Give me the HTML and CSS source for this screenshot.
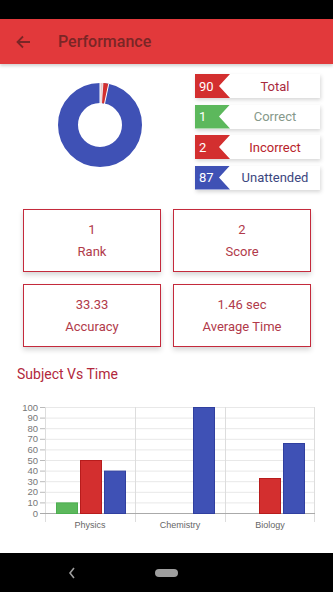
FILE: index.html
```html
<!DOCTYPE html>
<html>
<head>
<meta charset="utf-8">
<link rel="stylesheet" href="styles.css">
</head>
<body>
<div class="status"></div>
<header class="appbar">
  <svg class="back" width="16" height="14" viewBox="0 0 16 14"><path d="M15 7H2.5M8 1.5L2.5 7L8 12.5" fill="none" stroke="#7a2626" stroke-width="1.8"/></svg>
  <span class="title">Performance</span>
</header>
<main class="main">
  <section class="top">
    <div class="donut-wrap">
      <svg class="donut" width="84" height="84" viewBox="0 0 84 84">
        <g transform="rotate(-90 42 42)">
          <circle cx="42" cy="42" r="32" fill="none" stroke="#3f51b5" stroke-width="20"/>
          <circle cx="42" cy="42" r="32" fill="none" stroke="#d32f2f" stroke-width="20" stroke-dasharray="4.47 200" stroke-dashoffset="-2.23"/>
          <circle cx="42" cy="42" r="32" fill="none" stroke="#e8c9c9" stroke-width="20" stroke-dasharray="2.23 200"/>
        </g>
        <line x1="42" y1="42" x2="42" y2="0" stroke="#fff" stroke-width="1"/>
        <line x1="42" y1="42" x2="44.93" y2="0.1" stroke="#fff" stroke-width="0.8"/>
        <line x1="42" y1="42" x2="50.73" y2="0.9" stroke="#fff" stroke-width="1"/>
      </svg>
    </div>
    <div class="legend">
      <div class="chip"><span class="badge red">90</span><span class="lbl l-total">Total</span></div>
      <div class="chip"><span class="badge green">1</span><span class="lbl l-correct">Correct</span></div>
      <div class="chip"><span class="badge red">2</span><span class="lbl l-incorrect">Incorrect</span></div>
      <div class="chip"><span class="badge blue">87</span><span class="lbl l-unatt">Unattended</span></div>
    </div>
  </section>
  <section class="cards">
    <div class="card"><span>1</span><span>Rank</span></div>
    <div class="card"><span>2</span><span>Score</span></div>
    <div class="card"><span>33.33</span><span>Accuracy</span></div>
    <div class="card"><span>1.46 sec</span><span>Average Time</span></div>
  </section>
  <h2 class="sub">Subject Vs Time</h2>
  <svg class="chart" width="333" height="140" viewBox="0 395 333 140">
    <g stroke="#e8e8e8" stroke-width="1">
      <line x1="45" x2="315" y1="407.5" y2="407.5"/>
      <line x1="45" x2="315" y1="418.1" y2="418.1"/>
      <line x1="45" x2="315" y1="428.7" y2="428.7"/>
      <line x1="45" x2="315" y1="439.3" y2="439.3"/>
      <line x1="45" x2="315" y1="449.9" y2="449.9"/>
      <line x1="45" x2="315" y1="460.5" y2="460.5"/>
      <line x1="45" x2="315" y1="471.1" y2="471.1"/>
      <line x1="45" x2="315" y1="481.7" y2="481.7"/>
      <line x1="45" x2="315" y1="492.3" y2="492.3"/>
      <line x1="45" x2="315" y1="502.9" y2="502.9"/>
    </g>
    <g stroke="#bbb" stroke-width="1">
      <line x1="40" x2="45" y1="407.5" y2="407.5"/>
      <line x1="40" x2="45" y1="418.1" y2="418.1"/>
      <line x1="40" x2="45" y1="428.7" y2="428.7"/>
      <line x1="40" x2="45" y1="439.3" y2="439.3"/>
      <line x1="40" x2="45" y1="449.9" y2="449.9"/>
      <line x1="40" x2="45" y1="460.5" y2="460.5"/>
      <line x1="40" x2="45" y1="471.1" y2="471.1"/>
      <line x1="40" x2="45" y1="481.7" y2="481.7"/>
      <line x1="40" x2="45" y1="492.3" y2="492.3"/>
      <line x1="40" x2="45" y1="502.9" y2="502.9"/>
      <line x1="40" x2="45" y1="513.5" y2="513.5"/>
    </g>
    <g stroke="#ddd" stroke-width="1">
      <line x1="45.5" x2="45.5" y1="407" y2="522"/>
      <line x1="135.5" x2="135.5" y1="407" y2="522"/>
      <line x1="225.5" x2="225.5" y1="407" y2="522"/>
      <line x1="314.5" x2="314.5" y1="407" y2="522"/>
    </g>
    <line x1="40" x2="315" y1="513.5" y2="513.5" stroke="#aaa" stroke-width="1"/>
    <g class="ylab" text-anchor="end">
      <text x="38" y="410.5">100</text>
      <text x="38" y="421.1">90</text>
      <text x="38" y="431.7">80</text>
      <text x="38" y="442.3">70</text>
      <text x="38" y="452.9">60</text>
      <text x="38" y="463.5">50</text>
      <text x="38" y="474.1">40</text>
      <text x="38" y="484.7">30</text>
      <text x="38" y="495.3">20</text>
      <text x="38" y="505.9">10</text>
      <text x="38" y="516.5">0</text>
    </g>
    <g stroke-width="1">
      <rect x="56.5" y="502.9" width="21" height="10.6" fill="#5cb85c" stroke="#4caf50"/>
      <rect x="80.5" y="460.5" width="21" height="53" fill="#d32f2f" stroke="#b71c1c"/>
      <rect x="104.5" y="471.1" width="21" height="42.4" fill="#3f51b5" stroke="#303f9f"/>
      <rect x="193.5" y="407.5" width="21" height="106" fill="#3f51b5" stroke="#303f9f"/>
      <rect x="259.5" y="478.5" width="21" height="35" fill="#d32f2f" stroke="#b71c1c"/>
      <rect x="283.5" y="443.5" width="21" height="70" fill="#3f51b5" stroke="#303f9f"/>
    </g>
    <g class="xlab" text-anchor="middle">
      <text x="90" y="528">Physics</text>
      <text x="180" y="528">Chemistry</text>
      <text x="270" y="528">Biology</text>
    </g>
  </svg>
</main>
<nav class="navbar">
  <svg width="8" height="12" viewBox="0 0 8 12" class="nav-back"><path d="M6 1L2 6L6 11" fill="none" stroke="#9e9e9e" stroke-width="1.6"/></svg>
  <span class="pill"></span>
</nav>
</body>
</html>
```
FILE: styles.css
```css
* { box-sizing: border-box; }
html, body { margin: 0; padding: 0; }
body {
  width: 333px;
  height: 592px;
  display: flex;
  flex-direction: column;
  background: #fff;
  font-family: Roboto, "Noto Sans", sans-serif;
  overflow: hidden;
}
.status { height: 19px; background: #000; flex: none; }
.appbar {
  height: 45px;
  flex: none;
  background: #e2393b;
  display: flex;
  align-items: center;
  box-shadow: 0 2px 3px rgba(0,0,0,0.18);
  position: relative;
  z-index: 1;
}
.back { margin-left: 15px; margin-top: 1px; }
.title {
  margin-left: 27px;
  font-size: 16px;
  font-weight: 500;
  color: #7a2626;
}
.main { flex: 1; display: flex; flex-direction: column; }
.top { display: flex; padding-top: 10px; }
.donut-wrap { width: 195px; padding-left: 58px; padding-top: 9px; }
.donut { display: block; }
.legend { display: flex; flex-direction: column; gap: 6.5px; }
.chip {
  position: relative;
  width: 125px;
  height: 24px;
  display: flex;
  align-items: center;
  background: #fff;
  box-shadow: 1px 2px 4px rgba(0,0,0,0.16);
}
.badge {
  width: 35px;
  height: 24px;
  display: flex;
  align-items: center;
  padding-left: 4px;
  color: #fff;
  font-size: 13px;
  clip-path: polygon(0 0, 100% 0, 24px 50%, 100% 100%, 0 100%);
}
.badge.red { background: #d32f2f; }
.badge.green { background: #5cb85c; }
.badge.blue { background: #3f51b5; }
.lbl { flex: 1; text-align: center; font-size: 13px; }
.l-total { color: #a92a3e; }
.l-correct { color: #86998a; }
.l-incorrect { color: #b8232b; }
.l-unatt { color: #3b4680; }
.cards {
  display: grid;
  grid-template-columns: 138px 138px;
  column-gap: 12px;
  row-gap: 12px;
  padding-left: 23px;
  margin-top: 19.5px;
}
.card {
  height: 63px;
  border: 1px solid #c42a3c;
  box-shadow: 0 3px 5px rgba(0,0,0,0.16);
  display: flex;
  flex-direction: column;
  align-items: center;
  justify-content: center;
  gap: 6px;
  color: #b13a4a;
  font-size: 13px;
  line-height: 16px;
}
.sub {
  margin: 18px 0 0 17px;
  font-size: 14px;
  font-weight: 400;
  color: #b2283c;
  line-height: 18px;
}
.chart { display: block; margin-top: 12px; }
.ylab text { font-size: 9.5px; fill: #777; font-family: "Liberation Sans", Arial, sans-serif; }
.xlab text { font-size: 9px; fill: #666; font-family: "Liberation Sans", Arial, sans-serif; }
.navbar {
  height: 39px;
  flex: none;
  background: #000;
  position: relative;
}
.nav-back { position: absolute; left: 68px; top: 14px; }
.pill {
  position: absolute;
  left: 155px;
  top: 16px;
  width: 23px;
  height: 8px;
  border-radius: 4px;
  background: #9e9e9e;
}
```
